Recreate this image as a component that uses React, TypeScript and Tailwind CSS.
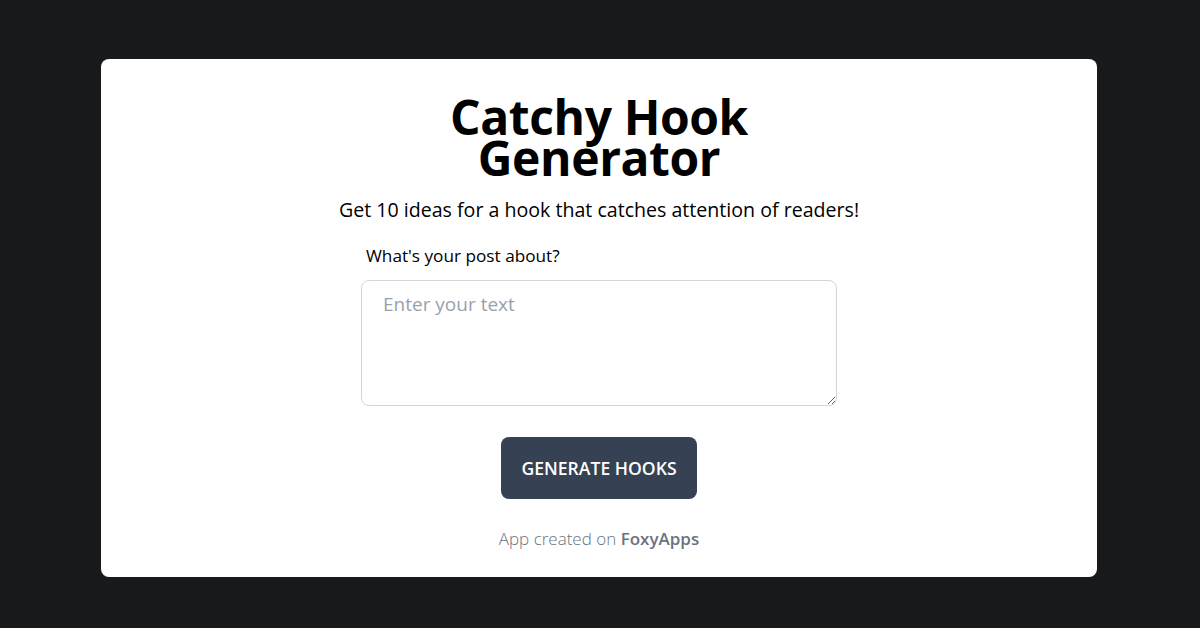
export default function App() {
  return (
    <div
      className="w-[1200px] h-[628px] bg-[#18191b] flex items-start pl-[101px] pt-[59px]"
      style={{ fontFamily: '"Open Sans", "Noto Sans", sans-serif' }}
    >
      <div className="w-[996px] h-[518px] bg-white rounded-lg flex flex-col items-center">
        <h1 className="mt-[37px] w-[340px] text-center text-[48px] leading-[41px] font-bold text-black tracking-[-0.4px]">
          Catchy Hook Generator
        </h1>
        <p className="mt-[18px] text-[19.6px] leading-[28px] text-black">
          Get 10 ideas for a hook that catches attention of readers!
        </p>
        <div className="mt-[19px] w-[476px] flex flex-col">
          <label className="ml-[5px] text-[17.2px] leading-[26px] text-black">
            What's your post about?
          </label>
          <textarea
            placeholder="Enter your text"
            className="mt-[11px] h-[126px] w-full rounded-lg border border-gray-300 px-[21px] pt-[9px] pb-[12px] text-[19px] text-black placeholder:text-gray-400 outline-none"
          />
        </div>
        <button className="mt-[31px] w-[196px] h-[62px] rounded-lg bg-gray-700 text-white text-[17.6px] font-semibold uppercase">
          Generate Hooks
        </button>
        <p className="mt-[27px] text-[17px] leading-[26px] text-gray-500 font-light">
          App created on <span className="font-semibold">FoxyApps</span>
        </p>
      </div>
    </div>
  );
}
